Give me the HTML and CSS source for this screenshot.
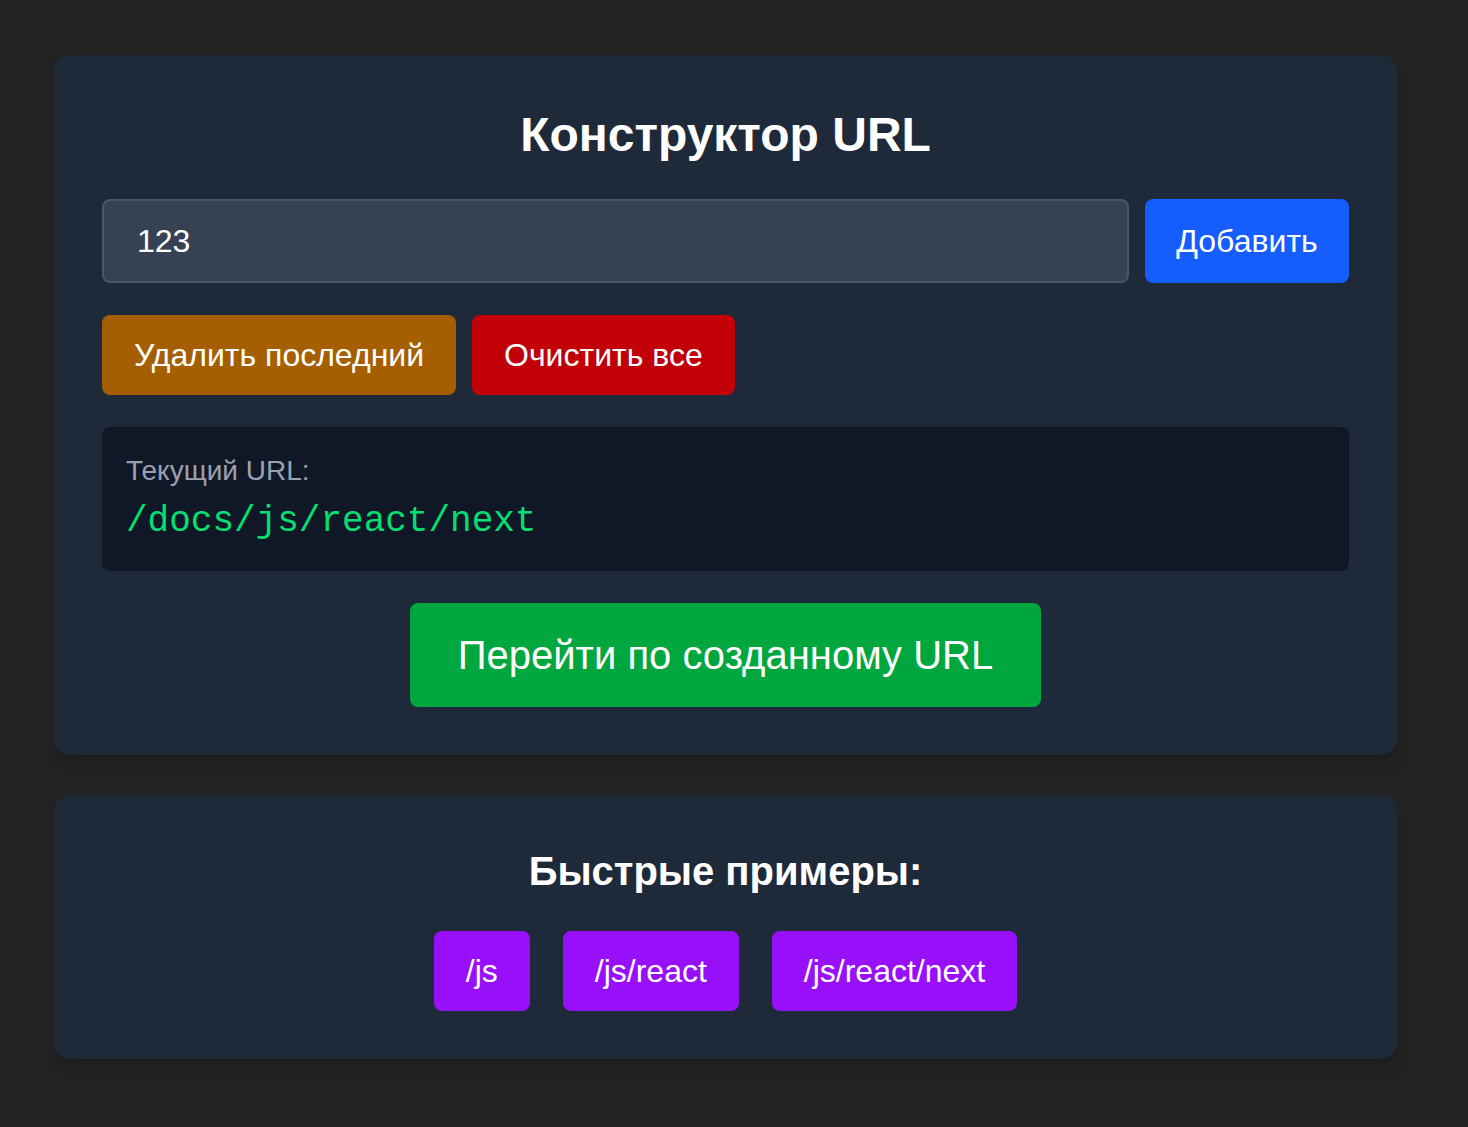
FILE: index.html
```html
<!DOCTYPE html>
<html lang="ru">
<head>
<meta charset="utf-8">
<title>Конструктор URL</title>
<link rel="stylesheet" href="styles.css">
</head>
<body>
<div class="wrap">
  <section class="card">
    <h1 class="title">Конструктор URL</h1>
    <div class="row">
      <input class="field" type="text" value="123">
      <button class="btn btn-blue">Добавить</button>
    </div>
    <div class="row">
      <button class="btn btn-yellow">Удалить последний</button>
      <button class="btn btn-red">Очистить все</button>
    </div>
    <div class="current">
      <div class="current-label">Текущий URL:</div>
      <div class="current-url">/docs/js/react/next</div>
    </div>
    <div class="center">
      <button class="btn btn-green">Перейти по созданному URL</button>
    </div>
  </section>
  <section class="card">
    <h2 class="subtitle">Быстрые примеры:</h2>
    <div class="examples">
      <button class="btn btn-purple">/js</button>
      <button class="btn btn-purple">/js/react</button>
      <button class="btn btn-purple">/js/react/next</button>
    </div>
  </section>
</div>
</body>
</html>
```

FILE: styles.css
```css
* { box-sizing: border-box; }
html, body { margin: 0; }
body {
  background: #232323;
  color: #fff;
  font-family: "Liberation Sans", Arial, sans-serif;
  min-height: 1127px;
}
.wrap {
  width: 1343px;
  margin-left: 54px;
  padding-top: 55px;
  display: flex;
  flex-direction: column;
  gap: 40px;
}
.card {
  background: #1e2939;
  border-radius: 16px;
  padding: 48px;
  display: flex;
  flex-direction: column;
  gap: 32px;
  box-shadow: 0 10px 15px -3px rgba(0,0,0,0.15), 0 4px 6px -4px rgba(0,0,0,0.15);
}
.title {
  margin: 0;
  text-align: center;
  font-size: 48px;
  line-height: 64px;
  font-weight: 700;
}
.subtitle {
  margin: 0;
  text-align: center;
  font-size: 40px;
  line-height: 56px;
  font-weight: 700;
}
.row { display: flex; gap: 16px; }
.field {
  flex: 1;
  height: 84px;
  background: #364153;
  border: 2px solid #4a5565;
  border-radius: 8px;
  color: #fff;
  font-family: "Liberation Sans", Arial, sans-serif;
  font-size: 32px;
  padding: 0 33px;
  outline: none;
}
.btn {
  border: 0;
  border-radius: 8px;
  color: #fff;
  font-family: "Liberation Sans", Arial, sans-serif;
  font-size: 32px;
  line-height: 40px;
  padding: 20px 32px;
  cursor: pointer;
}
.btn-blue { background: #155dfc; width: 204px; padding: 0; }
.btn-yellow { background: #a65f00; }
.btn-red { background: #c10007; }
.btn-green { background: #00a63e; font-size: 40px; line-height: 48px; padding: 28px 48px; }
.btn-purple { background: #9810fa; }
.current {
  background: #101828;
  border-radius: 8px;
  padding: 24px;
  height: 144px;
}
.current-label {
  color: #99a1af;
  font-size: 28px;
  line-height: 40px;
}
.current-url {
  color: #05df72;
  font-family: "Liberation Mono", "DejaVu Sans Mono", monospace;
  font-size: 36px;
  line-height: 48px;
  margin-top: 7px;
}
.center { display: flex; justify-content: center; }
.examples { display: flex; justify-content: center; gap: 33px; }
```
